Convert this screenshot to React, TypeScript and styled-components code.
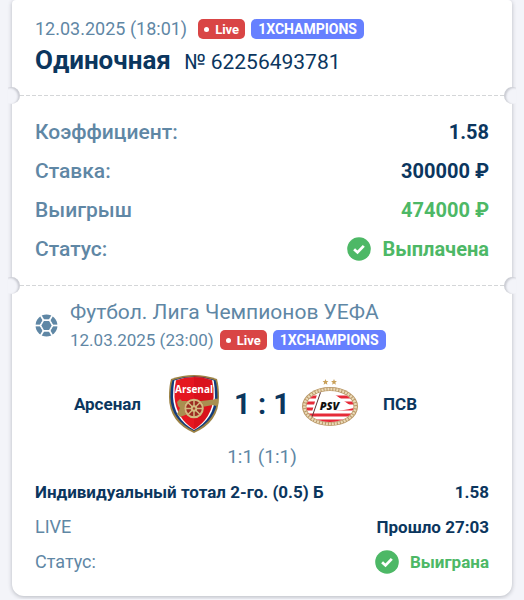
import React from "react";
import styled, { createGlobalStyle } from "styled-components";

const colors = {
  navy: "#0b365e",
  slate: "#5f87a5",
  green: "#4db866",
  red: "#d94545",
  blue: "#6680ff",
  page: "#f3f4f9",
};

const GlobalStyle = createGlobalStyle`
  * { box-sizing: border-box; }
  body {
    margin: 0;
    background: ${colors.page};
    font-family: Roboto, "Liberation Sans", sans-serif;
    color: ${colors.navy};
  }
`;

const Page = styled.main`
  padding: 0 12px 3px;
  overflow: hidden;
`;

const Card = styled.article`
  background: #fff;
  border-radius: 4px 4px 12px 12px;
  box-shadow: 0 1px 4px rgba(40, 45, 60, 0.3);
`;

const Header = styled.header`
  padding: 18px 23px 15px;
`;

const DateLine = styled.div<{ $gap?: number }>`
  display: flex;
  align-items: center;
  gap: ${(p) => p.$gap ?? 6}px;
  height: 22px;
  white-space: nowrap;
`;

const DateText = styled.time<{ $size: number }>`
  font-size: ${(p) => p.$size}px;
  line-height: 22px;
  color: ${colors.slate};
`;

const BadgeGroup = styled.span`
  display: flex;
  gap: 6px;
`;

const Badge = styled.span<{ $tone: "red" | "blue" }>`
  display: inline-flex;
  align-items: center;
  gap: 6px;
  height: 20px;
  padding: 0 ${(p) => (p.$tone === "red" ? 6 : 7)}px;
  border-radius: 5px;
  background: ${(p) => colors[p.$tone]};
  color: #fff;
  font-size: ${(p) => (p.$tone === "red" ? 13 : 14)}px;
  font-weight: 700;
`;

const Dot = styled.i`
  width: 5px;
  height: 5px;
  border-radius: 50%;
  background: #fff;
`;

const TitleLine = styled.div`
  display: flex;
  align-items: baseline;
  gap: 13px;
  margin-top: 2px;
  line-height: 36px;
  white-space: nowrap;
`;

const Title = styled.h1`
  margin: 0;
  font-size: 26px;
  font-weight: 700;
`;

const Ticket = styled.span`
  font-size: 21px;
`;

const Divider = styled.div`
  position: relative;
  height: 1px;
  margin: 0 8px;
  background: repeating-linear-gradient(90deg, #d4d6d8 0 4px, transparent 4px 6px);

  &::before,
  &::after {
    content: "";
    position: absolute;
    top: -8px;
    width: 17px;
    height: 17px;
    border-radius: 50%;
    background: ${colors.page};
  }
  &::before {
    left: -17px;
    box-shadow: inset -2px 1px 2px rgba(40, 45, 60, 0.2);
    clip-path: inset(0 0 0 5px);
  }
  &::after {
    right: -17px;
    box-shadow: inset 2px 1px 2px rgba(40, 45, 60, 0.2);
    clip-path: inset(0 5px 0 0);
  }
`;

const Summary = styled.dl`
  margin: 0;
  padding: 16px 23px 17px;
`;

const Row = styled.div<{ $compact?: boolean }>`
  display: flex;
  align-items: center;
  justify-content: space-between;
  height: ${(p) => (p.$compact ? 35 : 39)}px;
  font-size: ${(p) => (p.$compact ? 17 : 20)}px;
  white-space: nowrap;
`;

const Label = styled.dt<{ $light?: boolean }>`
  color: ${colors.slate};
  font-size: ${(p) => (p.$light ? 18 : 21)}px;
  font-weight: ${(p) => (p.$light ? 400 : 500)};
`;

const Market = styled.dt`
  font-size: 17px;
  font-weight: 700;
`;

const Value = styled.dd<{ $green?: boolean }>`
  display: flex;
  align-items: center;
  gap: 11px;
  margin: 0;
  font-weight: 700;
  color: ${(p) => (p.$green ? colors.green : colors.navy)};
`;

const Match = styled.section`
  padding: 13px 23px 17px;
`;

const League = styled.header`
  display: flex;
  align-items: center;
  gap: 12px;
`;

const LeagueText = styled.div`
  min-width: 0;
`;

const LeagueName = styled.h2`
  margin: 0 0 4px;
  font-size: 21px;
  line-height: 26px;
  font-weight: 400;
  color: ${colors.slate};
  white-space: nowrap;
`;

const Teams = styled.div`
  display: grid;
  grid-template-columns: 1fr 58px 78px 58px 1fr;
  align-items: center;
  justify-items: center;
  height: 64px;
  margin-top: 21px;
`;

const Team = styled.span<{ $side: "home" | "away" }>`
  justify-self: ${(p) => (p.$side === "home" ? "end" : "start")};
  padding: 0 24px;
  font-size: 17px;
  font-weight: 700;
`;

const Score = styled.strong`
  font-size: 29px;
  font-weight: 700;
  white-space: nowrap;
`;

const Periods = styled.p`
  margin: 10px 0 6px;
  font-size: 19px;
  line-height: 22px;
  text-align: center;
  color: ${colors.slate};
`;

const Bet = styled.dl`
  margin: 0;
`;

function Check() {
  return (
    <svg width="24" height="24" viewBox="0 0 24 24" aria-hidden="true">
      <circle cx="12" cy="12" r="11.8" fill={colors.green} />
      <path d="m7.1 12.2 3.4 3.2 6.3-6.5" fill="none" stroke="#fff" strokeWidth="2.8" />
    </svg>
  );
}

function Football() {
  const spokes = [0, 60, 120, 180, 240, 300];
  return (
    <svg width="23" height="23" viewBox="0 0 24 24" aria-hidden="true">
      <circle cx="12" cy="12" r="11.4" fill={colors.slate} />
      <g stroke="#fff" strokeLinejoin="round">
        <path d="M8.6 6.1h6.8l3.4 5.9-3.4 5.9H8.6L5.2 12z" fill="#fff" strokeWidth="1" />
        {spokes.map((a) => (
          <path key={a} d="M18 12h6" strokeWidth="1.8" transform={`rotate(${a} 12 12)`} />
        ))}
      </g>
      <path d="M9.3 7.3h5.4l2.7 4.7-2.7 4.7H9.3L6.6 12z" fill={colors.slate} />
    </svg>
  );
}

function ArsenalCrest() {
  const spokes = [0, 45, 90, 135];
  return (
    <svg width="52" height="60" viewBox="0 0 52 60" role="img" aria-label="Arsenal">
      <path d="M3 5Q26-3 49 5Q51 12 51 23Q51 48 26 59Q1 48 1 23Q1 12 3 5Z" fill="#9c8244" />
      <path d="M4.5 6.2Q26-1 47.5 6.2Q49.5 13 49.5 23Q49 46 26 57Q3 46 2.5 23Q2.5 13 4.5 6.2Z" fill="#123b7b" />
      <path d="M6.3 6.5Q26 0 45.7 6.5Q47 14 47 23Q46 45 26 56Q6 45 5 23Q5 14 6.3 6.5Z" fill="#fff" />
      <path d="M8 6.2Q26 0 44 6.2Q46 14 45.5 23Q44 44 26 55.5Q8 44 6.5 23Q6 14 8 6.2Z" fill="#e51720" />
      <path d="M26 2Q35 2 44 6.2Q46 14 45.5 23Q44 44 26 55.5Z" fill="#c90e18" opacity=".45" />
      <text x="26" y="18.5" fill="#fff" fontFamily="Open Sans, sans-serif" fontSize="10" fontWeight="700" textAnchor="middle">Arsenal</text>
      <path d="M10.5 26.5 12 25l2 2h19l13-1.500 2-1 2 1v5.5l-2 1-3-1-11 2-4 4H15l-5-5-1-4z" fill="#a98f50" />
      <path d="M12 34 9 40l3 3 8-3 4-5z" fill="#a98f50" />
      <circle cx="26" cy="34.5" r="9.8" fill="#9c2b22" />
      <circle cx="26" cy="34.5" r="8.8" fill="none" stroke="#d3bb80" strokeWidth="2" />
      {spokes.map((a) => (
        <path key={a} d="M17.5 34.5h17" stroke="#d3bb80" strokeWidth="1.5" transform={`rotate(${a} 26 34.5)`} />
      ))}
      <circle cx="26" cy="34.5" r="3.2" fill="#d3bb80" />
      <circle cx="26" cy="34.5" r="1.2" fill="#a6402c" />
    </svg>
  );
}

function PsvCrest() {
  const star = "m0-4 1.1 2.6 2.8.2-2.1 1.9.7 2.8L0 2-2.5 3.5l.7-2.8-2.1-1.9 2.8-.2z";
  return (
    <svg width="58" height="50" viewBox="0 0 58 50" role="img" aria-label="PSV">
      <defs>
        <clipPath id="psv-field">
          <ellipse cx="29" cy="27.500" rx="23.500" ry="15.500" />
        </clipPath>
      </defs>
      <path d={star} transform="translate(24.500 3) scale(.75)" fill="#c9a15a" />
      <path d={star} transform="translate(33 3) scale(.75)" fill="#c9a15a" />
      <ellipse cx="29" cy="27.5" rx="28" ry="19.5" fill="#b99868" />
      <ellipse cx="29" cy="27.5" rx="25.6" ry="17.4" fill="none" stroke="#ead9b6" strokeWidth="2.6" strokeDasharray="2 1" />
      <ellipse cx="29" cy="27.5" rx="23.5" ry="15.5" fill="#fff" />
      <g clipPath="url(#psv-field)">
        <path d="M5 18h48M5 24h48M5 30h48M5 36h48M5 42h48" stroke="#e62a38" strokeWidth="3" />
        <path d="M17 12q8 5 16 3l20 14q-12 3-22 3-10 3-20 1z" fill="#fff" />
        <path d="M20 12 10 41" stroke="#5b3437" strokeWidth="1" />
      </g>
      <text x="28.5" y="31" fill="#111" fontFamily="Open Sans, sans-serif" fontSize="11" fontWeight="800" fontStyle="italic" textAnchor="middle">PSV</text>
    </svg>
  );
}

function Badges() {
  return (
    <BadgeGroup>
      <Badge $tone="red"><Dot />Live</Badge>
      <Badge $tone="blue">1XCHAMPIONS</Badge>
    </BadgeGroup>
  );
}

export default function App() {
  return (
    <Page>
      <GlobalStyle />
      <Card>
        <Header>
          <DateLine $gap={11}>
            <DateText $size={18}>12.03.2025 (18:01)</DateText>
            <Badges />
          </DateLine>
          <TitleLine>
            <Title>Одиночная</Title>
            <Ticket>№ 62256493781</Ticket>
          </TitleLine>
        </Header>
        <Divider />
        <Summary>
          <Row><Label>Коэффициент:</Label><Value>1.58</Value></Row>
          <Row><Label>Ставка:</Label><Value>300000 ₽</Value></Row>
          <Row><Label>Выигрыш</Label><Value $green>474000 ₽</Value></Row>
          <Row><Label>Статус:</Label><Value $green><Check />Выплачена</Value></Row>
        </Summary>
        <Divider />
        <Match>
          <League>
            <Football />
            <LeagueText>
              <LeagueName>Футбол. Лига Чемпионов УЕФА</LeagueName>
              <DateLine>
                <DateText $size={17}>12.03.2025 (23:00)</DateText>
                <Badges />
              </DateLine>
            </LeagueText>
          </League>
          <Teams>
            <Team $side="home">Арсенал</Team>
            <ArsenalCrest />
            <Score>1 : 1</Score>
            <PsvCrest />
            <Team $side="away">ПСВ</Team>
          </Teams>
          <Periods>1:1 (1:1)</Periods>
          <Bet>
            <Row $compact><Market>Индивидуальный тотал 2-го. (0.5) Б</Market><Value>1.58</Value></Row>
            <Row $compact><Label $light>LIVE</Label><Value>Прошло 27:03</Value></Row>
            <Row $compact><Label $light>Статус:</Label><Value $green><Check />Выиграна</Value></Row>
          </Bet>
        </Match>
      </Card>
    </Page>
  );
}
